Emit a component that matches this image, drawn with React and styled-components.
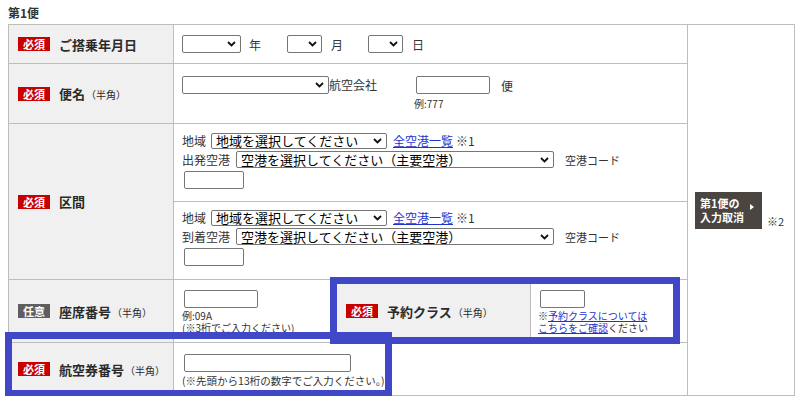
import React from 'react';
import styled, { createGlobalStyle } from 'styled-components';

const Global = createGlobalStyle`
  html, body { margin: 0; padding: 0; background: #fff; }
  body {
    font-family: "Noto Sans CJK JP", "Noto Sans", sans-serif;
    color: #333;
  }
`;

const Page = styled.div`
  padding: 5px 0 0 8px;
  width: 786px;
`;

const Title = styled.div`
  font-size: 12px;
  font-weight: 700;
  line-height: 16px;
  height: 19px;
  color: #333;
`;

const Frame = styled.div`
  position: relative;
`;

const Table = styled.table`
  border-collapse: collapse;
  table-layout: fixed;
  width: 786px;
  font-size: 12px;
`;

const Row = styled.tr`
  height: ${p => p.$h}px;
`;

const Label = styled.th`
  background: #f0f0f0;
  border: 1px solid #bdbdbd;
  text-align: left;
  padding: 0 0 0 ${p => p.$pl || 9}px;
  vertical-align: middle;
  font-weight: 400;
`;

const LabelInner = styled.div`
  display: flex;
  align-items: center;
`;

const Badge = styled.span`
  display: inline-block;
  width: 32px;
  height: 14px;
  line-height: 14px;
  text-align: center;
  font-size: 11px;
  font-weight: 700;
  color: #fff;
  background: ${p => (p.$optional ? '#5f5f5f' : '#c80000')};
  flex: none;
`;

const LabelText = styled.span`
  margin-left: 9px;
  font-size: 13px;
  font-weight: 700;
  color: #2a2a2a;
  white-space: nowrap;
`;

const Half = styled.span`
  font-size: 10px;
  font-weight: 400;
  margin-left: 1px;
`;

const Cell = styled.td`
  border: 1px solid #bdbdbd;
  padding: ${p => p.$pt || 0}px 0 0 ${p => p.$pl || 8}px;
  vertical-align: ${p => p.$va || 'top'};
`;

const Line = styled.div`
  display: flex;
  align-items: ${p => p.$align || 'center'};
  margin-bottom: ${p => p.$mb || 0}px;
  white-space: nowrap;
`;

const SelectWrap = styled.span`
  position: relative;
  display: inline-flex;
  margin: 0 ${p => p.$mr || 0}px 0 ${p => p.$ml || 0}px;
`;

const Select = styled.select`
  appearance: none;
  -webkit-appearance: none;
  width: ${p => p.$w}px;
  height: ${p => p.$h || 18}px;
  border: 1px solid #767676;
  border-radius: 2px;
  background: #fff;
  font-family: "Noto Sans CJK JP", sans-serif;
  font-size: 13px;
  line-height: 14px;
  color: #000;
  padding: 0 0 0 4px;
  margin: 0;
`;

const Chevron = styled.svg`
  position: absolute;
  right: 5px;
  top: 50%;
  margin-top: -3px;
  width: 9px;
  height: 6px;
  pointer-events: none;
`;

const Input = styled.input`
  display: block;
  width: ${p => p.$w}px;
  height: 18px;
  box-sizing: border-box;
  border: 1px solid #767676;
  border-radius: 2px;
  margin: 0 0 0 2px;
  padding: 0;
  background: #fff;
`;

const Text = styled.span`
  font-size: ${p => p.$fs || 12}px;
  margin-left: ${p => p.$ml || 0}px;
  color: #333;
`;

const Link = styled.a`
  color: #1f33cf;
  text-decoration: underline;
  font-size: ${p => p.$fs || 12}px;
  margin-left: ${p => p.$ml || 0}px;
`;

const Note = styled.div`
  font-size: ${p => p.$fs || 10}px;
  line-height: ${p => p.$lh || 12}px;
  color: #333;
  margin-top: ${p => p.$mt || 0}px;
  white-space: nowrap;
`;

const FlightCol = styled.div`
  display: flex;
  flex-direction: column;
  margin-left: 37px;
`;

const SubBlock = styled.div`
  height: ${p => p.$h}px;
  box-sizing: border-box;
  padding: ${p => p.$pt}px 0 0 8px;
  border-top: ${p => (p.$divider ? '1px solid #bdbdbd' : 'none')};
`;

const SideCell = styled.td`
  border: 1px solid #bdbdbd;
  vertical-align: middle;
  padding: 0 0 0 7px;
`;

const CancelWrap = styled.div`
  display: flex;
  align-items: flex-end;
`;

const CancelButton = styled.button`
  display: flex;
  align-items: flex-start;
  width: 67px;
  height: 37px;
  box-sizing: border-box;
  padding: 4px 0 0 5px;
  border: none;
  background: #4a4541;
  color: #fff;
  font-family: "Noto Sans CJK JP", sans-serif;
  font-size: 11px;
  font-weight: 700;
  line-height: 14px;
  text-align: left;
  cursor: pointer;
`;

const Arrow = styled.span`
  margin: 8px 0 0 6px;
  width: 0;
  height: 0;
  border-top: 3px solid transparent;
  border-bottom: 3px solid transparent;
  border-left: 4px solid #fff;
`;

const Highlight = styled.div`
  position: absolute;
  box-sizing: border-box;
  border: 7px solid #4048c8;
  pointer-events: none;
`;

const Dropdown = ({ w, h, ml, mr }) => (
  <SelectWrap $ml={ml} $mr={mr}>
    <Select $w={w} $h={h} defaultValue="">
      <option value=""></option>
    </Select>
    <Chevron viewBox="0 0 9 6">
      <path d="M1 1 L4.5 4.5 L8 1" fill="none" stroke="#111" strokeWidth="1.8" />
    </Chevron>
  </SelectWrap>
);

const TextDropdown = ({ w, h, ml, mr, text }) => (
  <SelectWrap $ml={ml} $mr={mr}>
    <Select $w={w} $h={h} defaultValue="a">
      <option value="a">{text}</option>
    </Select>
    <Chevron viewBox="0 0 9 6">
      <path d="M1 1 L4.5 4.5 L8 1" fill="none" stroke="#111" strokeWidth="1.8" />
    </Chevron>
  </SelectWrap>
);

const FieldLabel = ({ optional, title, half }) => (
  <LabelInner>
    <Badge $optional={optional}>{optional ? '任意' : '必須'}</Badge>
    <LabelText>
      {title}
      {half && <Half>（半角）</Half>}
    </LabelText>
  </LabelInner>
);

const Route = ({ kind, divider, h, pt }) => (
  <SubBlock $divider={divider} $h={h} $pt={pt}>
    <Line $mb={2}>
      <Text>地域</Text>
      <TextDropdown w={176} h={16} ml={5} text="地域を選択してください" />
      <Link href="#" $ml={6}>全空港一覧</Link>
      <Text $ml={3}>※1</Text>
    </Line>
    <Line $mb={3}>
      <Text>{kind}</Text>
      <TextDropdown w={318} h={17} ml={6} text="空港を選択してください（主要空港）" />
      <Text $ml={11} $fs={11}>空港コード</Text>
    </Line>
    <Input $w={60} />
  </SubBlock>
);

export default function App() {
  return (
    <Page>
      <Global />
      <Title>第1便</Title>
      <Frame>
        <Table>
          <colgroup>
            <col style={{ width: 165 }} />
            <col style={{ width: 157 }} />
            <col style={{ width: 200 }} />
            <col style={{ width: 157 }} />
            <col style={{ width: 107 }} />
          </colgroup>
          <tbody>
            <Row $h={39}>
              <Label><FieldLabel title="ご搭乗年月日" /></Label>
              <Cell colSpan={3} $va="middle">
                <Line>
                  <Dropdown w={59} />
                  <Text $ml={8}>年</Text>
                  <Dropdown w={35} ml={26} />
                  <Text $ml={9}>月</Text>
                  <Dropdown w={35} ml={25} />
                  <Text $ml={9}>日</Text>
                </Line>
              </Cell>
              <SideCell rowSpan={6}>
                <CancelWrap>
                  <CancelButton type="button">
                    <span>第1便の<br />入力取消</span>
                    <Arrow />
                  </CancelButton>
                  <Text $ml={5} $fs={11}>※2</Text>
                </CancelWrap>
              </SideCell>
            </Row>
            <Row $h={60}>
              <Label><FieldLabel title="便名" half /></Label>
              <Cell colSpan={3} $pt={12}>
                <Line $align="flex-start">
                  <Dropdown w={147} />
                  <Text>航空会社</Text>
                  <FlightCol>
                    <Line>
                      <Input $w={74} />
                      <Text $ml={11}>便</Text>
                    </Line>
                    <Note $mt={4}>例:777</Note>
                  </FlightCol>
                </Line>
              </Cell>
            </Row>
            <Row $h={77}>
              <Label rowSpan={2}><FieldLabel title="区間" /></Label>
              <Cell colSpan={3} rowSpan={2} $pl={0.01}>
                <Route kind="出発空港" h={77} pt={8} />
                <Route kind="到着空港" h={78} pt={7} divider />
              </Cell>
            </Row>
            <Row $h={78} />
            <Row $h={63}>
              <Label><FieldLabel optional title="座席番号" half /></Label>
              <Cell $pt={10}>
                <Input $w={74} />
                <Note $mt={2}>例:09A</Note>
                <Note>(※3桁でご入力ください)</Note>
              </Cell>
              <Label $pl={15}><FieldLabel title="予約クラス" half /></Label>
              <Cell $pt={10} $pl={7}>
                <Input $w={45} />
                <Note $mt={2}>※<Link href="#" $fs={10}>予約クラスについては</Link></Note>
                <Note><Link href="#" $fs={10}>こちらをご確認</Link>ください</Note>
              </Cell>
            </Row>
            <Row $h={53}>
              <Label><FieldLabel title="航空券番号" half /></Label>
              <Cell colSpan={3} $pt={11}>
                <Input $w={167} />
                <Note $fs={10.5} $lh={12} $mt={3}>(※先頭から13桁の数字でご入力ください。)</Note>
              </Cell>
            </Row>
          </tbody>
        </Table>
        <Highlight style={{ left: 322, top: 253, width: 350, height: 67 }} />
        <Highlight style={{ left: -3, top: 308, width: 387, height: 65 }} />
      </Frame>
    </Page>
  );
}
